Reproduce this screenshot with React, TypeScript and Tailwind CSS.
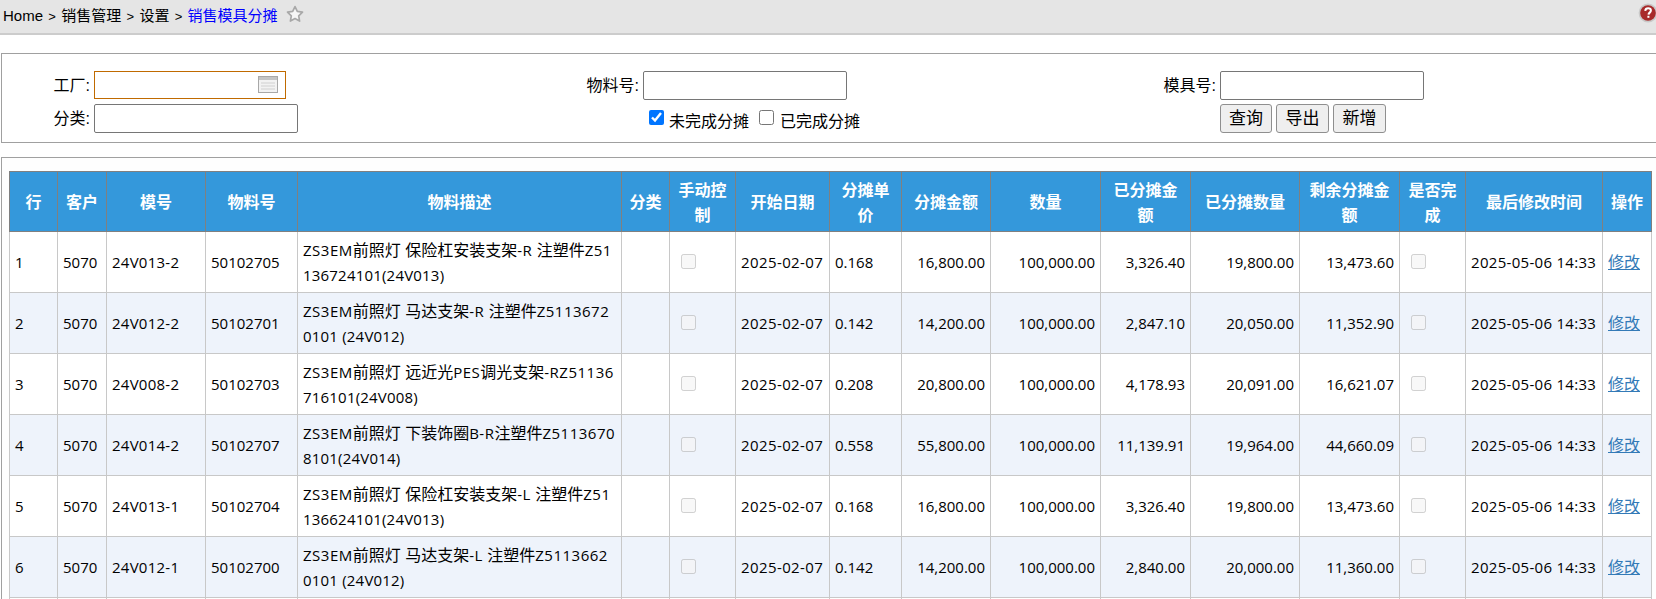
import React from "react";

const widths = [48, 49, 99, 92, 324, 48, 66, 94, 72, 89, 110, 90, 109, 100, 66, 137, 49];
const heads: string[][] = [
  ["行"], ["客户"], ["模号"], ["物料号"], ["物料描述"], ["分类"], ["手动控", "制"], ["开始日期"], ["分摊单", "价"],
  ["分摊金额"], ["数量"], ["已分摊金", "额"], ["已分摊数量"], ["剩余分摊金", "额"], ["是否完", "成"], ["最后修改时间"], ["操作"],
];
const rows = [
  { n: "1", mold: "24V013-2", mat: "50102705", d: ["ZS3EM前照灯 保险杠安装支架-R 注塑件Z51", "136724101(24V013)"], p: "0.168", amt: "16,800.00", done: "3,326.40", qty: "19,800.00", rest: "13,473.60" },
  { n: "2", mold: "24V012-2", mat: "50102701", d: ["ZS3EM前照灯 马达支架-R 注塑件Z5113672", "0101 (24V012)"], p: "0.142", amt: "14,200.00", done: "2,847.10", qty: "20,050.00", rest: "11,352.90" },
  { n: "3", mold: "24V008-2", mat: "50102703", d: ["ZS3EM前照灯 远近光PES调光支架-RZ51136", "716101(24V008)"], p: "0.208", amt: "20,800.00", done: "4,178.93", qty: "20,091.00", rest: "16,621.07" },
  { n: "4", mold: "24V014-2", mat: "50102707", d: ["ZS3EM前照灯 下装饰圈B-R注塑件Z5113670", "8101(24V014)"], p: "0.558", amt: "55,800.00", done: "11,139.91", qty: "19,964.00", rest: "44,660.09" },
  { n: "5", mold: "24V013-1", mat: "50102704", d: ["ZS3EM前照灯 保险杠安装支架-L 注塑件Z51", "136624101(24V013)"], p: "0.168", amt: "16,800.00", done: "3,326.40", qty: "19,800.00", rest: "13,473.60" },
  { n: "6", mold: "24V012-1", mat: "50102700", d: ["ZS3EM前照灯 马达支架-L 注塑件Z5113662", "0101 (24V012)"], p: "0.142", amt: "14,200.00", done: "2,840.00", qty: "20,000.00", rest: "11,360.00" },
];

const ui = "font-['Liberation_Sans','Noto_Sans_CJK_SC',sans-serif]";
const tableFont = "font-['Open_Sans','Noto_Sans_CJK_SC',sans-serif]";

function Mixed({ text, track }: { text: string; track: string }) {
  const parts = text.split(/([\u4e00-\u9fff]+)/).filter(Boolean);
  return (
    <>
      {parts.map((p, i) =>
        /[\u4e00-\u9fff]/.test(p) ? (
          <span key={i} className="text-[16px]">{p}</span>
        ) : (
          <span key={i} className={track}>{p}</span>
        )
      )}
    </>
  );
}

function Star() {
  return (
    <svg width="18" height="18" viewBox="0 0 18 18" className="ml-[8px] -mt-[5px] block">
      <path d="M9 1.6l2.3 4.8 5.2.7-3.8 3.7.9 5.3L9 13.6l-4.6 2.5.9-5.3L1.5 7.1l5.2-.7z" fill="#f6f6f6" stroke="#a8a8a8" strokeWidth="1.7" strokeLinejoin="round" />
    </svg>
  );
}

function Help() {
  return (
    <svg width="20" height="20" viewBox="0 0 20 20" className="block">
      <circle cx="10" cy="10" r="9.4" fill="#c9c9c9" />
      <circle cx="10" cy="10" r="7.8" fill="#a82a2a" />
      <path d="M7.2 7.8c.2-1.7 1.4-2.5 2.9-2.5 1.6 0 2.8.9 2.8 2.3 0 2-2.3 2-2.4 4" fill="none" stroke="#fff" strokeWidth="2" />
      <rect x="9.4" y="12.8" width="2" height="2" fill="#fff" />
    </svg>
  );
}

function PickerIcon() {
  return (
    <svg width="20" height="17" viewBox="0 0 20 17" className="absolute right-[8px] top-[5px]">
      <rect x="0.5" y="0.5" width="19" height="16" fill="#f2f2f2" stroke="#a8a8a8" />
      <rect x="1" y="1" width="18" height="3" fill="#c4c4c4" />
      <path d="M3 7h14M3 10h14M3 13h14" stroke="#d0d0d0" strokeWidth="1" />
    </svg>
  );
}

function Label({ children }: { children: React.ReactNode }) {
  return <label className="flex h-[29px] items-center justify-end pr-[4px] text-[16px] whitespace-nowrap">{children}</label>;
}

function TextInput() {
  return <input type="text" className="block h-[29px] w-[204px] rounded-[2px] border border-[#767676] bg-white" />;
}

function Btn({ w, children }: { w: string; children: React.ReactNode }) {
  return (
    <button className={`h-[29px] ${w} rounded-[3px] border border-[#8f8f8f] bg-[#efefef] text-[17px] leading-none text-black`}>
      {children}
    </button>
  );
}

function Sep() {
  return <span className="mx-[5.3px] text-[13px]">&gt;</span>;
}

function Disabled() {
  return <input type="checkbox" disabled className="m-0 mb-[2px] block h-[15px] w-[15px]" />;
}

export default function App() {
  const tdBase = "border border-[#c8c8c8] px-[5px] align-middle";
  return (
    <div className={`h-[599px] w-full overflow-hidden bg-white text-black ${ui} text-[15px]`}>
      <div className="flex h-[35px] items-center justify-between border-b-2 border-[#cccccc] bg-[#e5e5e5] pl-[3px]">
        <div className="flex items-center whitespace-pre">
          <span>Home</span>
          <Sep />
          <span>销售管理</span>
          <Sep />
          <span>设置</span>
          <Sep />
          <span className="text-[#0000ff]">销售模具分摊</span>
          <Star />
        </div>
        <div className="-mt-[7px] -mr-[2px]">
          <Help />
        </div>
      </div>

      <div className="mt-[18px] ml-px h-[90px] w-[1670px] border border-[#a0a0a0] pt-[17px]">
        <div className="grid grid-cols-[92px_406px_143px_357px_220px_1fr] gap-y-[4px]">
          <Label>工厂:</Label>
          <div className="relative w-[192px]">
            <input type="text" className="block h-[28px] w-[192px] border border-[#c06a00] bg-white" />
            <PickerIcon />
          </div>
          <Label>物料号:</Label>
          <TextInput />
          <Label>模具号:</Label>
          <TextInput />

          <Label>分类:</Label>
          <TextInput />
          <div />
          <div className="flex h-[29px] items-start whitespace-nowrap pl-[6px] text-[16px]">
            <input type="checkbox" defaultChecked className="m-0 mt-[6px] h-[15px] w-[15px]" />
            <span className="ml-[5px] mt-[6px] leading-[24px]">未完成分摊</span>
            <input type="checkbox" className="m-0 ml-[10px] mt-[6px] h-[15px] w-[15px]" />
            <span className="ml-[6px] mt-[6px] leading-[24px]">已完成分摊</span>
          </div>
          <div />
          <div className="flex gap-[4px]">
            <Btn w="w-[52px]">查询</Btn>
            <Btn w="w-[53px]">导出</Btn>
            <Btn w="w-[53px]">新增</Btn>
          </div>
        </div>
      </div>

      <div className="mt-[14px] ml-px w-[1670px] border border-[#a0a0a0] bg-[#fefefe] pl-[7px] pt-[13px]">
        <table className={`w-[1643px] table-fixed border-collapse text-[15px] leading-[25px] ${tableFont}`}>
          <colgroup>
            {widths.map((w, i) => (
              <col key={i} style={{ width: w }} />
            ))}
          </colgroup>
          <thead>
            <tr className="h-[60px] bg-[#3498db]">
              {heads.map((h, i) => (
                <th key={i} className="border border-[#808080] p-0 pt-[2px] text-center align-middle text-[16px] font-bold text-white">
                  {h.map((l, j) => (
                    <div key={j}>{l}</div>
                  ))}
                </th>
              ))}
            </tr>
          </thead>
          <tbody>
            {rows.map((r, i) => (
              <tr key={r.n} className={`h-[61px] ${i % 2 ? "bg-[#eef3fb]" : "bg-white"}`}>
                <td className={tdBase}>{r.n}</td>
                <td className={tdBase}>5070</td>
                <td className={`${tdBase} tracking-[0.25px]`}>{r.mold}</td>
                <td className={tdBase}>{r.mat}</td>
                <td className={`${tdBase} pt-[2px]`}>
                  <div className="whitespace-nowrap"><Mixed text={r.d[0]} track="tracking-[0.5px]" /></div>
                  <div className="whitespace-nowrap"><Mixed text={r.d[1]} track="tracking-[0.2px]" /></div>
                </td>
                <td className={tdBase}></td>
                <td className={`${tdBase} pl-[11px]`}><Disabled /></td>
                <td className={`${tdBase} tracking-[0.4px]`}>2025-02-07</td>
                <td className={tdBase}>{r.p}</td>
                <td className={`${tdBase} text-right`}>{r.amt}</td>
                <td className={`${tdBase} text-right`}>100,000.00</td>
                <td className={`${tdBase} text-right`}>{r.done}</td>
                <td className={`${tdBase} text-right`}>{r.qty}</td>
                <td className={`${tdBase} text-right`}>{r.rest}</td>
                <td className={`${tdBase} pl-[11px]`}><Disabled /></td>
                <td className={`${tdBase} whitespace-nowrap tracking-[0.3px]`}>2025-05-06 14:33</td>
                <td className={`${tdBase} text-[16px] text-[#337ab7] underline`}>修改</td>
              </tr>
            ))}
            <tr className="h-[61px] bg-white">
              {widths.map((_, i) => (
                <td key={i} className={tdBase}></td>
              ))}
            </tr>
          </tbody>
        </table>
      </div>
    </div>
  );
}
